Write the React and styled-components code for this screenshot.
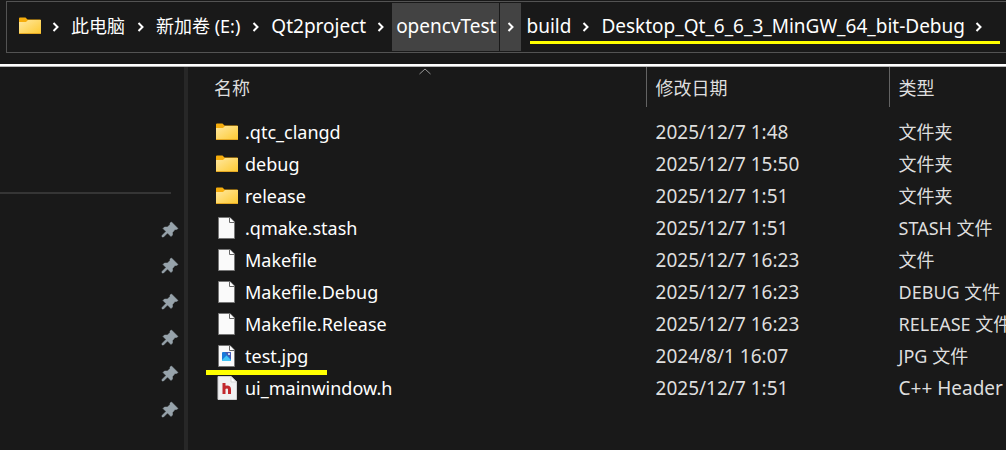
import React from 'react'
import styled, { createGlobalStyle, css } from 'styled-components'

const GlobalStyle = createGlobalStyle`
  * {
    box-sizing: border-box;
  }
  body {
    margin: 0;
    background: #191919;
    color: #fff;
    font-family: 'Noto Sans', 'Noto Sans CJK SC', sans-serif;
    font-size: 18px;
    line-height: 24px;
    overflow: hidden;
  }
`

const Window = styled.div`
  display: flex;
  flex-direction: column;
  min-height: 100vh;
`

const AddressBar = styled.nav`
  display: flex;
  height: 52px;
  margin: 1px 0 11px 6px;
  padding: 1px 0 1px 12px;
  border: 1px solid #535353;
  border-right: 0;
  white-space: nowrap;
`

const AddressIcon = styled.span`
  display: flex;
  align-items: center;
  width: 26px;
  padding-bottom: 2px;
  flex-shrink: 0;
`

const Crumb = styled.div`
  display: flex;
  flex-shrink: 0;
  gap: 1px;
  margin-right: 1px;
`

const CrumbButton = styled.button`
  display: flex;
  align-items: center;
  justify-content: center;
  padding: 0 4px 2px;
  border: 0;
  background: ${props => (props.$active ? '#434343' : 'transparent')};
  color: inherit;
  font: inherit;
  ${props =>
    props.$latin &&
    css`
      padding-right: 3px;
      font-size: 19px;
    `}
`

const ArrowButton = styled(CrumbButton)`
  width: 21px;
  padding: 0;
`

const MarkedPath = styled.div`
  position: relative;
  display: flex;
  flex-shrink: 0;
`

const markStyles = css`
  position: absolute;
  background: #ff0;
  pointer-events: none;
`

const PathMark = styled.span`
  ${markStyles}
  top: 38px;
  left: 8px;
  right: -9px;
  height: 3px;
`

const FileMark = styled.span`
  ${markStyles}
  left: -9px;
  bottom: -3px;
  width: 121px;
  height: 5px;
  z-index: 1;
`

const Content = styled.div`
  display: flex;
  flex: 1;
  border-top: 2px solid #fff;
  box-shadow: inset 0 1px #b5b5b5;
`

const Sidebar = styled.aside`
  width: 184px;
  flex-shrink: 0;
  padding: 126px 5px 0 0;
`

const Divider = styled.hr`
  margin: 0 8px 27px 0;
  border: 0;
  border-top: 2px solid #353535;
`

const PinList = styled.ul`
  display: flex;
  flex-direction: column;
  align-items: flex-end;
  gap: 18px;
  margin: 0;
  padding: 0;
  list-style: none;

  li {
    display: flex;
  }
`

const Main = styled.main`
  flex: 1;
  min-width: 0;
  margin-top: 1px;
  padding-left: 17px;
  border-left: 4px solid #272727;
  overflow: hidden;
`

const FileTable = styled.table`
  width: 100%;
  table-layout: fixed;
  border-collapse: collapse;
  white-space: nowrap;
`

const Col = styled.col`
  width: ${props => props.$width};
`

const HeadCell = styled.th`
  position: relative;
  padding: 0 0 9px;
  color: #dedede;
  font-weight: 400;
  text-align: left;
`

const HeadLabel = styled.div`
  height: 40px;
  padding-left: 9px;
  border-left: ${props => (props.$first ? '0' : '1px solid #636363')};
  line-height: 42px;
`

const SortArrow = styled.svg`
  position: absolute;
  top: 1px;
  left: 50%;
  margin-left: -6px;
`

const Cell = styled.td`
  height: 32px;
  padding: 0 0 0 10px;
  color: ${props => (props.$name ? '#fff' : '#dedede')};
  ${props => props.$latin && 'font-size: 19px;'}
`

const FileName = styled.div`
  position: relative;
  display: flex;
  align-items: center;
  gap: 6px;
  height: 32px;
`

const IconBox = styled.span`
  display: flex;
  justify-content: center;
  width: 24px;
`

const IconFolder = () => (
  <svg width="22" height="18" viewBox="0 0 22 18" aria-hidden="true">
    <defs>
      <linearGradient id="folder" x1="0" y1="0" x2="1" y2="1">
        <stop offset="0" stopColor="#ffe8a0" />
        <stop offset="1" stopColor="#fdc930" />
      </linearGradient>
    </defs>
    <path d="M0 1.5Q0 .5 1 .5H6.5L8.5 2.5H21Q22 2.5 22 3.5V8H0Z" fill="#f6ad0c" />
    <path d="M0 5H7L9 3H22V17H0Z" fill="url(#folder)" />
    <path d="M0 16.5H22" stroke="#e5a823" />
  </svg>
)

const IconFile = ({ children }) => (
  <svg width="18" height="22" viewBox="0 0 18 22" aria-hidden="true">
    <path d="M.5.5H12L16.5 5V21.5H.5Z" fill="#fafafa" stroke="#777" />
    <path d="M11.5 .5V5.500H16.5" fill="#fff" stroke="#666" />
    {children}
  </svg>
)

const IconImage = () => (
  <IconFile>
    <rect x="4" y="7" width="9" height="9" rx="1" fill="#197ad9" />
    <path d="M7 7H12Q13 7 13 8V14L9 10Z" fill="#465bb4" />
    <path d="M4 15 8.500 10.500 13 15V16H4Z" fill="#43c4f5" />
    <circle cx="11" cy="9" r="1" fill="#fff" />
  </IconFile>
)

const IconHeader = () => (
  <svg width="20" height="24" viewBox="0 0 20 24" aria-hidden="true">
    <path d="M1 .5H14L19.500 6V23.500H1Z" fill="#f1f1f2" stroke="#d0d0d2" />
    <path d="M14 .5V6H19.500Z" fill="#fff" stroke="#d5d5d5" />
    <path
      d="M7 7V18M7 12.500Q8 11 10 11Q12.500 11 12.500 13.500V18"
      fill="none"
      stroke="#c2282d"
      strokeWidth="3"
    />
  </svg>
)

const IconPin = () => (
  <svg width="18" height="18" viewBox="0 0 18 18" aria-hidden="true">
    <path
      d="M10.500 1 17 7.500 15.500 8.500 14 8.500 11.500 11.500V14L10 15.500 6.500 12 2.500 16H1V14.500L5 10.500 2 7.500 3.500 6H6.500L9 3.500V2Z"
      fill="#97a3ab"
      stroke="#97a3ab"
      strokeLinejoin="round"
      strokeWidth=".5"
    />
  </svg>
)

const IconChevron = () => (
  <svg width="8" height="10" viewBox="0 0 8 10" aria-hidden="true">
    <path d="M1.500 1 5.500 5 1.500 9" fill="none" stroke="#fff" strokeWidth="2" />
  </svg>
)

const icons = {
  folder: IconFolder,
  file: IconFile,
  image: IconImage,
  header: IconHeader,
}

const files = [
  { icon: 'folder', name: '.qtc_clangd', date: '2025/12/7 1:48', type: '文件夹' },
  { icon: 'folder', name: 'debug', date: '2025/12/7 15:50', type: '文件夹' },
  { icon: 'folder', name: 'release', date: '2025/12/7 1:51', type: '文件夹' },
  { icon: 'file', name: '.qmake.stash', date: '2025/12/7 1:51', type: 'STASH 文件' },
  { icon: 'file', name: 'Makefile', date: '2025/12/7 16:23', type: '文件' },
  { icon: 'file', name: 'Makefile.Debug', date: '2025/12/7 16:23', type: 'DEBUG 文件' },
  { icon: 'file', name: 'Makefile.Release', date: '2025/12/7 16:23', type: 'RELEASE 文件' },
  { icon: 'image', name: 'test.jpg', date: '2024/8/1 16:07', type: 'JPG 文件', marked: true },
  { icon: 'header', name: 'ui_mainwindow.h', date: '2025/12/7 1:51', type: 'C++ Header' },
]

const isLatin = text => !/[\u4e00-\u9fff]/.test(text)

const PathItem = ({ name, active }) => (
  <Crumb>
    {name && (
      <CrumbButton $active={active} $latin={isLatin(name)}>
        {name}
      </CrumbButton>
    )}
    <ArrowButton $active={active} aria-label="展开">
      <IconChevron />
    </ArrowButton>
  </Crumb>
)

const FileRow = ({ icon, name, date, type, marked }) => {
  const Icon = icons[icon]
  return (
    <tr>
      <Cell $name>
        <FileName>
          <IconBox>
            <Icon />
          </IconBox>
          {name}
          {marked && <FileMark />}
        </FileName>
      </Cell>
      <Cell $latin>{date}</Cell>
      <Cell $latin={isLatin(type)}>{type}</Cell>
    </tr>
  )
}

const App = () => (
  <>
    <GlobalStyle />
    <Window>
      <AddressBar>
        <AddressIcon>
          <IconFolder />
        </AddressIcon>
        <PathItem />
        <PathItem name="此电脑" />
        <PathItem name="新加卷 (E:)" />
        <PathItem name="Qt2project" />
        <PathItem name="opencvTest" active />
        <MarkedPath>
          <PathItem name="build" />
          <PathItem name="Desktop_Qt_6_6_3_MinGW_64_bit-Debug" />
          <PathMark />
        </MarkedPath>
      </AddressBar>
      <Content>
        <Sidebar>
          <Divider />
          <PinList>
            {[1, 2, 3, 4, 5, 6].map(pin => (
              <li key={pin}>
                <IconPin />
              </li>
            ))}
          </PinList>
        </Sidebar>
        <Main>
          <FileTable>
            <colgroup>
              <Col $width="55%" />
              <Col $width="243px" />
              <Col $width="auto" />
            </colgroup>
            <thead>
              <tr>
                <HeadCell>
                  <HeadLabel $first>名称</HeadLabel>
                  <SortArrow width="12" height="7" viewBox="0 0 12 7" aria-hidden="true">
                    <path d="M.5 6 6 1 11.500 6" fill="none" stroke="#999" />
                  </SortArrow>
                </HeadCell>
                <HeadCell>
                  <HeadLabel>修改日期</HeadLabel>
                </HeadCell>
                <HeadCell>
                  <HeadLabel>类型</HeadLabel>
                </HeadCell>
              </tr>
            </thead>
            <tbody>
              {files.map(file => (
                <FileRow key={file.name} {...file} />
              ))}
            </tbody>
          </FileTable>
        </Main>
      </Content>
    </Window>
  </>
)

export default App
